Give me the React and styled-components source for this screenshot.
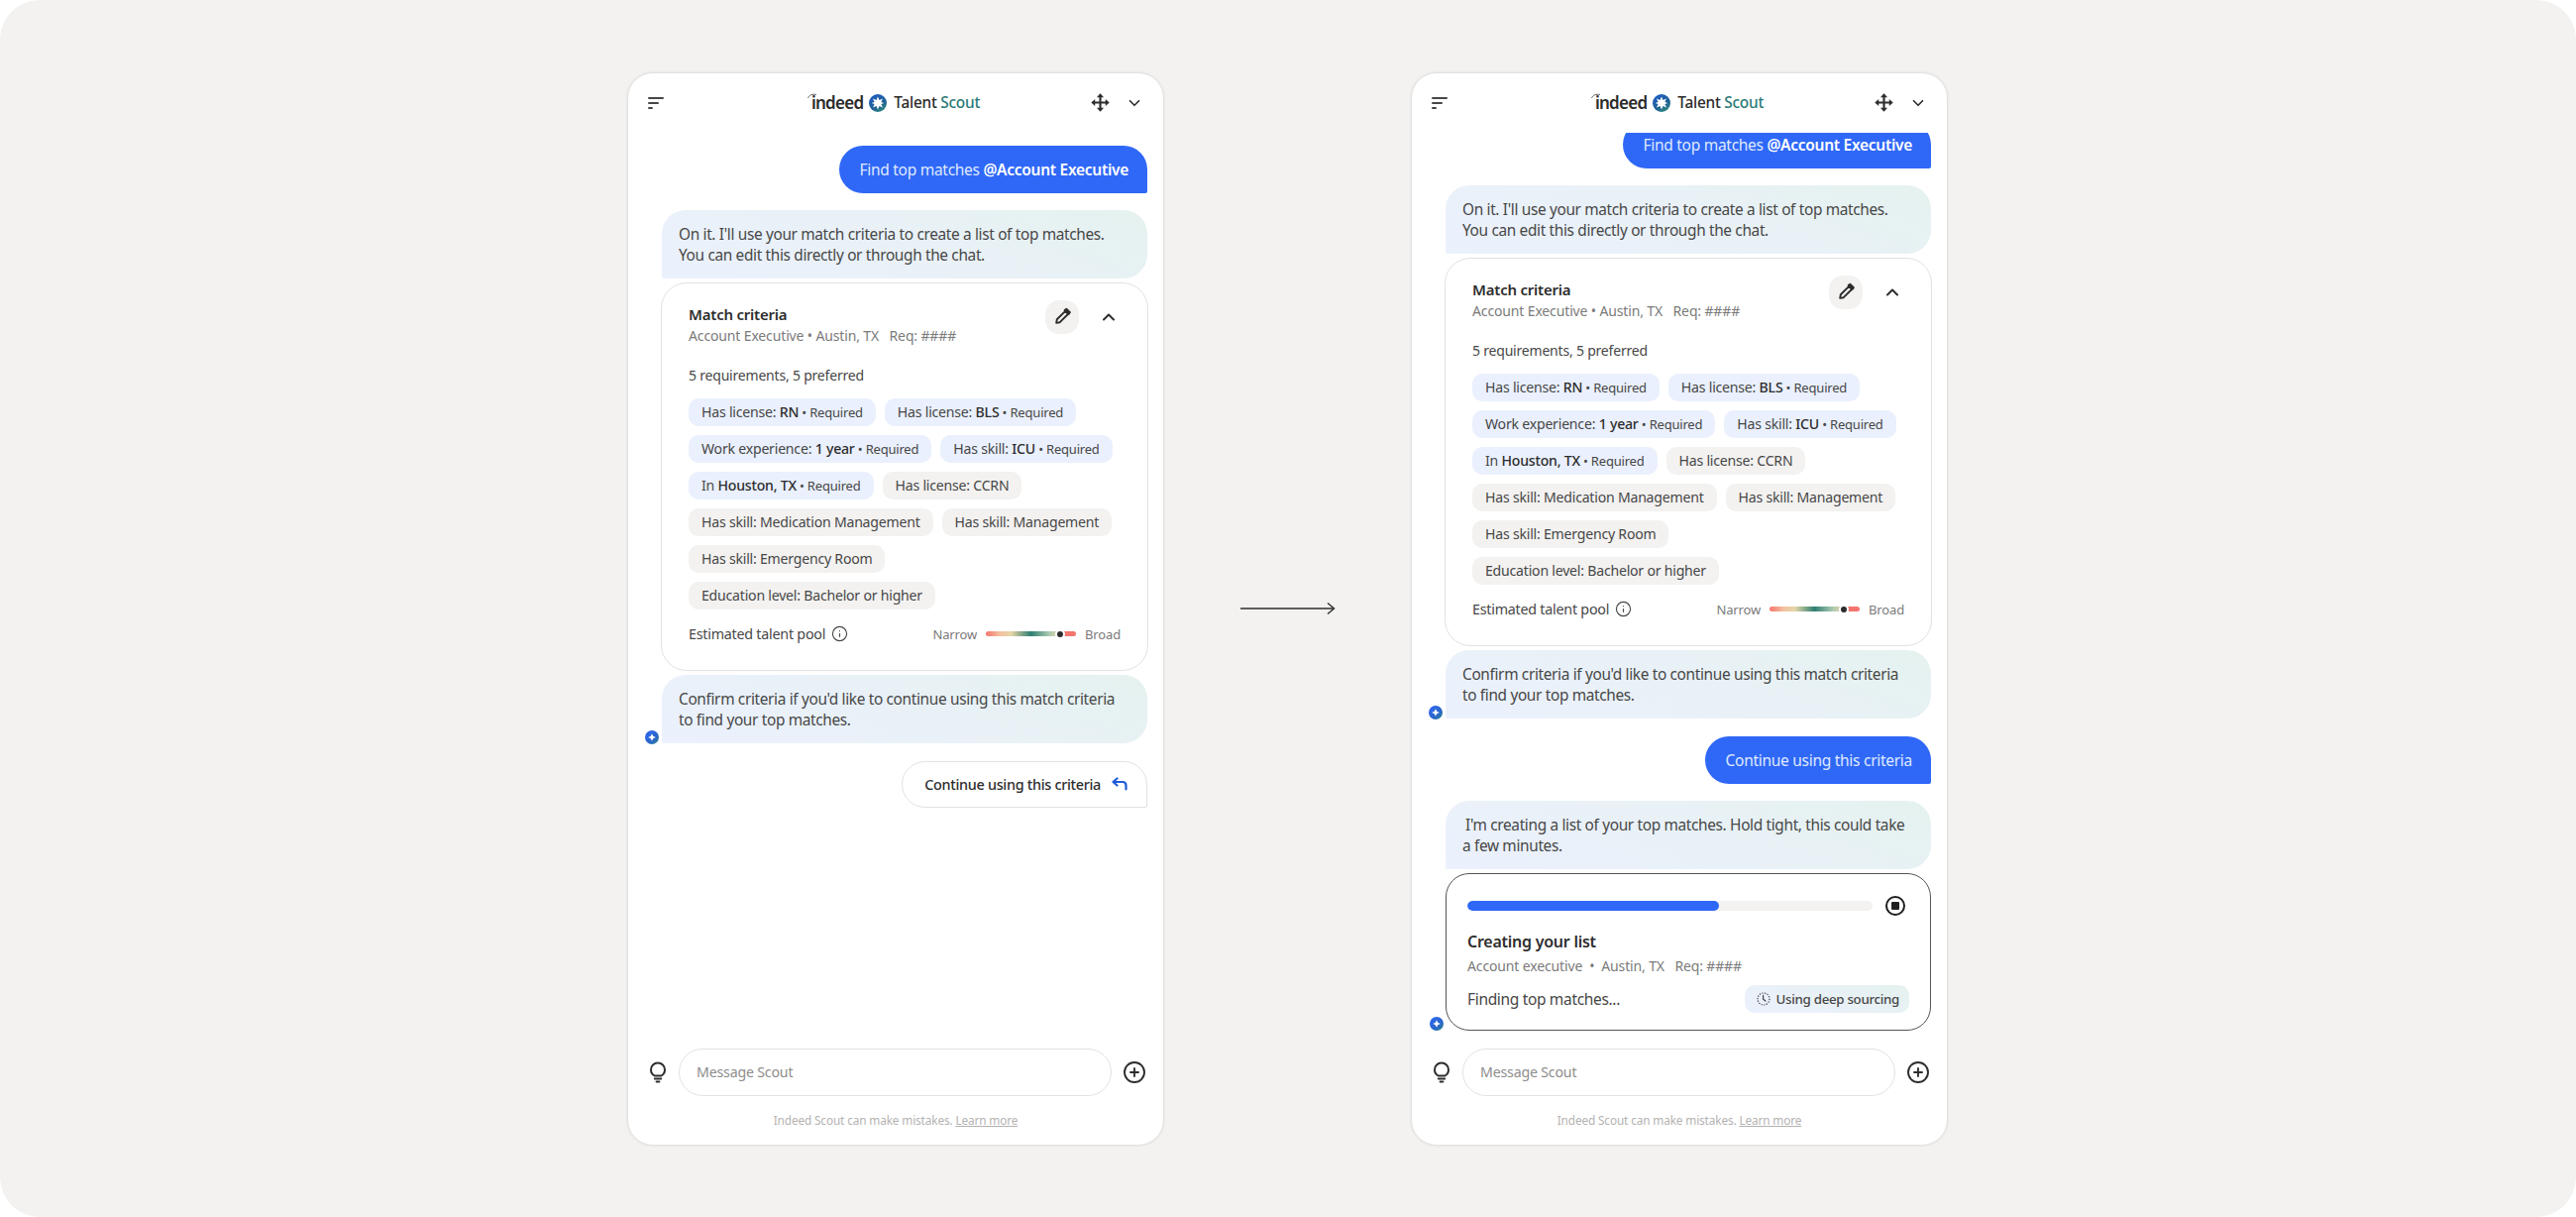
import React from 'react';
import styled, { createGlobalStyle } from 'styled-components';
import { ChevronDown, ChevronUp, CirclePlus, Info } from 'lucide-react';

const FONT = `"Noto Sans", "Open Sans", sans-serif`;
const BLUE = '#2f68f7';
const INK = '#2d2d2d';
const BODY = '#474747';
const MUTED = '#7b7b7b';
const LINE = '#e4e2e0';
const BUBBLE = 'linear-gradient(20deg, #ebf1fd 0%, #e9f1f7 50%, #e5f2ef 100%)';

const GlobalStyle = createGlobalStyle`
    html, body {
        margin: 0;
        padding: 0;
        background: #ffffff;
    }
    * {
        box-sizing: border-box;
    }
`

const Page = styled.div`
    width: 2600px;
    height: 1228px;
    display: flex;
    align-items: center;
    padding-left: 633px;
    overflow: hidden;
    border-radius: 40px;
    background: #f3f2f1;
    font-family: ${FONT};
    color: ${BODY};
`

const ArrowSlot = styled.div`
    width: 249px;
    flex: none;
    display: flex;
    justify-content: center;
`

const Panel = styled.section`
    width: 542px;
    height: 1083px;
    flex: none;
    display: flex;
    flex-direction: column;
    border: 1px solid ${LINE};
    border-radius: 26px;
    background: #ffffff;
    box-shadow: 0 0 3px rgba(0, 0, 0, 0.08);
    overflow: hidden;
`

const Header = styled.header`
    height: 60px;
    flex: none;
    display: grid;
    grid-template-columns: 1fr auto 1fr;
    align-items: center;
    padding: 0 20px;
`

const IconRow = styled.div`
    justify-self: end;
    display: flex;
    align-items: center;
    gap: 16px;
    color: ${INK};
`

const Logo = styled.div`
    display: flex;
    align-items: center;
    gap: 6px;
`

const Wordmark = styled.span`
    position: relative;
    font-size: 17px;
    line-height: 20px;
    font-weight: 600;
    letter-spacing: -0.75px;
    color: #2b2b2b;
`

const WordmarkArc = styled.svg`
    position: absolute;
    left: -4px;
    top: 0;
`

const Product = styled.span`
    margin-left: 1px;
    font-size: 15.4px;
    line-height: 20px;
    font-weight: 500;
    letter-spacing: -0.25px;
    color: #2b2b2b;
`

const ProductAccent = styled.span`
    color: #2a7a78;
`

const Messages = styled.div`
    flex: 1;
    min-height: 0;
    display: flex;
    flex-direction: column;
    justify-content: ${props => (props.$pinned ? 'flex-end' : 'flex-start')};
    padding: ${props => (props.$pinned ? '0 16px 18px 34px' : '13px 16px 0 34px')};
    overflow: hidden;
`

const UserBubble = styled.div`
    align-self: flex-end;
    flex: none;
    height: 48px;
    display: flex;
    align-items: center;
    padding: 0 19px 0 21px;
    margin-bottom: 17px;
    border-radius: 24px 24px 2px 24px;
    background: ${BLUE};
    color: #dfe8ff;
    font-size: 15.5px;
    letter-spacing: -0.28px;
    white-space: pre;
`

const Strong = styled.strong`
    font-weight: ${props => props.$light ? 600 : 500};
    color: ${props => props.$light ? '#ffffff' : INK};
`

const BotBubble = styled.div`
    position: relative;
    flex: none;
    height: 69px;
    padding: 14px 10px 0 17px;
    margin-bottom: ${props => props.$gap || 4}px;
    border-radius: 24px 24px 24px 2px;
    background: ${BUBBLE};
    font-size: 15.4px;
    line-height: 21.5px;
    letter-spacing: -0.34px;
    white-space: nowrap;
`

const Lead = styled.span`
    margin-left: 3px;
`

const Badge = styled.svg`
    position: absolute;
    left: -17px;
    bottom: -1px;
`

const CriteriaCard = styled.div`
    flex: none;
    height: 392px;
    margin: 0 -1px 4px;
    padding: 21px 27px 0;
    border: 1px solid ${LINE};
    border-radius: 26px;
`

const CardTop = styled.div`
    display: flex;
    justify-content: space-between;
    align-items: flex-start;
`

const CardTitle = styled.div`
    font-size: 15px;
    line-height: 20px;
    font-weight: 600;
    letter-spacing: -0.22px;
    color: ${INK};
`

const CardSub = styled.div`
    margin-top: 3px;
    font-size: 14px;
    line-height: 18px;
    letter-spacing: -0.14px;
    color: ${MUTED};
    white-space: pre;
`

const CardActions = styled.div`
    display: flex;
    align-items: center;
    gap: 20px;
    margin: -4px 2px 0 0;
    color: ${INK};
`

const EditButton = styled.div`
    width: 34px;
    height: 34px;
    display: flex;
    align-items: center;
    justify-content: center;
    border-radius: 14px;
    background: #f3f2f1;
`

const Count = styled.div`
    margin-top: 21px;
    font-size: 14px;
    line-height: 20px;
    letter-spacing: -0.2px;
`

const Chips = styled.div`
    display: flex;
    flex-wrap: wrap;
    gap: 9px;
    margin-top: 13px;
`

const Chip = styled.div`
    height: 28px;
    display: flex;
    align-items: center;
    padding: 0 13px;
    border-radius: 10px;
    background: ${props => (props.$required ? '#eaf0fd' : '#f3f2f1')};
    font-size: 14.1px;
    letter-spacing: -0.22px;
    white-space: pre;
`

const ChipNote = styled.span`
    font-size: 13px;
    letter-spacing: -0.2px;
`

const PoolRow = styled.div`
    display: flex;
    align-items: center;
    justify-content: space-between;
    margin-top: 15px;
    height: 20px;
`

const PoolLabel = styled.div`
    display: flex;
    align-items: center;
    gap: 6px;
    font-size: 14.3px;
    letter-spacing: -0.24px;
`

const Gauge = styled.div`
    display: flex;
    align-items: center;
    gap: 9px;
    font-size: 13px;
    letter-spacing: -0.15px;
    color: ${MUTED};
`

const GaugeBar = styled.div`
    position: relative;
    width: 91px;
    height: 5px;
    border-radius: 3px;
    background: linear-gradient(90deg, #f4756e 0%, #f3c2a0 16%, #e6d6a6 28%, #2f7f72 50%, #a9c9b0 70%, #eed9a8 83%, #f4756e 88%, #f4756e 100%);
`

const GaugeDot = styled.span`
    position: absolute;
    left: 70px;
    top: -2.5px;
    width: 10px;
    height: 10px;
    border: 2px solid #ffffff;
    border-radius: 50%;
    background: #2d2d2d;
`

const ReplyButton = styled.div`
    align-self: flex-end;
    flex: none;
    height: 47px;
    display: flex;
    align-items: center;
    gap: 11px;
    padding: 0 19px 0 22px;
    border: 1px solid ${LINE};
    border-radius: 24px 24px 2px 24px;
    font-size: 14.4px;
    font-weight: 500;
    letter-spacing: -0.3px;
    color: ${INK};
`

const ProgressCard = styled.div`
    position: relative;
    flex: none;
    height: 159px;
    padding: 22px 21px 0;
    border: 1.5px solid #555555;
    border-radius: 24px;
`

const ProgressRow = styled.div`
    display: flex;
    align-items: center;
    gap: 13px;
    margin-right: 4px;
`

const Track = styled.div`
    flex: 1;
    height: 10px;
    border-radius: 5px;
    background: #f3f2f1;
    overflow: hidden;
`

const Fill = styled.div`
    height: 100%;
    border-radius: 5px;
    background: ${BLUE};
`

const ProgressTitle = styled.div`
    margin-top: 15px;
    font-size: 16px;
    line-height: 22px;
    font-weight: 600;
    letter-spacing: -0.25px;
    color: ${INK};
`

const ProgressSub = styled(CardSub)`
    margin-top: 5px;
`

const ProgressFoot = styled.div`
    display: flex;
    align-items: center;
    justify-content: space-between;
    margin-top: 10px;
    font-size: 15.5px;
    letter-spacing: -0.33px;
`

const SourcingTag = styled.div`
    height: 28px;
    display: flex;
    align-items: center;
    gap: 6px;
    padding: 0 10px 0 12px;
    border-radius: 10px;
    background: ${BUBBLE};
    font-size: 13.3px;
    font-weight: 500;
    letter-spacing: -0.3px;
`

const Composer = styled.div`
    flex: none;
    display: flex;
    align-items: center;
    gap: 11px;
    padding: 0 17px 0 20px;
    color: ${INK};
`

const Input = styled.div`
    flex: 1;
    height: 48px;
    display: flex;
    align-items: center;
    padding: 0 17px;
    border: 1px solid ${LINE};
    border-radius: 24px;
    font-size: 14.2px;
    letter-spacing: -0.2px;
    color: #8d8d8d;
`

const Disclaimer = styled.div`
    flex: none;
    height: 49px;
    padding-top: 15px;
    text-align: center;
    font-size: 11.8px;
    line-height: 18px;
    letter-spacing: -0.13px;
    color: #b4b2b1;
`

const LearnMore = styled.span`
    text-decoration: underline;
`

const MoveIcon = () => (
    <svg width="19" height="19" viewBox="0 0 18 18" fill="currentColor">
        <path d="M9 0.3 L12.4 4 H5.6 Z M9 17.7 L5.6 14 H12.4 Z M0.3 9 L4 5.6 V12.4 Z M17.7 9 L14 12.4 V5.6 Z" />
        <path d="M9 3 V15 M3 9 H15" stroke="currentColor" strokeWidth="2" fill="none" />
    </svg>
);

const MenuIcon = () => (
    <svg width="16" height="14" viewBox="0 0 16 14" fill="currentColor">
        <rect x="0" y="1" width="16" height="2" rx="1" />
        <rect x="0" y="6" width="11" height="2" rx="1" />
        <rect x="0" y="11" width="5" height="2" rx="1" />
    </svg>
);

const StarBadge = ({ size }) => (
    <svg width={size} height={size} viewBox="0 0 18 18">
        <defs>
            <linearGradient id={`star-${size}`} x1="0.2" y1="0" x2="0.8" y2="1">
                <stop offset="0" stopColor="#1f5fc4" />
                <stop offset="0.6" stopColor="#1f5f95" />
                <stop offset="1" stopColor="#2f8f7c" />
            </linearGradient>
        </defs>
        <circle cx="9" cy="9" r="9" fill={`url(#star-${size})`} />
        <path d="M9 2.6 L10.5 6 L14 4.6 L12.4 8 L15.4 9 L12.4 10 L14 13.4 L10.5 12 L9 15.4 L7.5 12 L4 13.4 L5.6 10 L2.6 9 L5.6 8 L4 4.6 L7.5 6 Z" fill="#ffffff" />
    </svg>
);

const BubbleBadge = () => (
    <Badge width="14" height="14" viewBox="0 0 14 14">
        <defs>
            <linearGradient id="bubble-badge" x1="0" y1="0" x2="1" y2="1">
                <stop offset="0" stopColor="#2f68f7" />
                <stop offset="0.65" stopColor="#2a66c8" />
                <stop offset="1" stopColor="#2f8f7c" />
            </linearGradient>
        </defs>
        <circle cx="7" cy="7" r="7" fill="url(#bubble-badge)" />
        <path d="M7 3.2 L8.2 5.8 L10.8 7 L8.2 8.2 L7 10.8 L5.8 8.2 L3.2 7 L5.8 5.8 Z" fill="#ffffff" />
    </Badge>
);

const PencilIcon = () => (
    <svg width="19" height="19" viewBox="0 0 18 18" fill="none" stroke="currentColor" strokeWidth="1.8" strokeLinejoin="round">
        <path d="M3 15 L3.6 11.6 L11.6 3.6 L14.4 6.4 L6.4 14.4 Z" />
        <path d="M11 2.8 L12.6 1.6 L16 5 L14.8 6.6 Z" fill="currentColor" />
    </svg>
);

const ReplyIcon = () => (
    <svg width="16" height="14" viewBox="0 0 16 14" fill="none" stroke="#1f5bd8" strokeWidth="2.2" strokeLinecap="round" strokeLinejoin="round">
        <path d="M5.5 1.5 L1.5 5 L5.5 8.5" />
        <path d="M2 5 H11 Q14.5 5 14.5 8.5 V12.5" />
    </svg>
);

const BulbIcon = () => (
    <svg width="20" height="24" viewBox="0 0 20 24" fill="none" stroke="currentColor" strokeWidth="2" strokeLinecap="round">
        <path d="M6.6 15.5 C4.4 14.2 3 12 3 9.4 C3 5.6 6.1 2.6 10 2.6 C13.9 2.6 17 5.6 17 9.4 C17 12 15.6 14.2 13.4 15.5 Z" />
        <path d="M6.8 18.6 H13.2" />
        <path d="M8.6 21.4 H11.4" />
    </svg>
);

const StopIcon = () => (
    <svg width="20" height="20" viewBox="0 0 20 20">
        <circle cx="10" cy="10" r="9" fill="none" stroke="#1f1f1f" strokeWidth="2" />
        <rect x="6" y="6" width="8" height="8" rx="1" fill="#1f1f1f" />
    </svg>
);

const DottedClock = () => (
    <svg width="14" height="14" viewBox="0 0 14 14" fill="none" stroke="#424242">
        <circle cx="7" cy="7" r="6" strokeWidth="1.2" strokeDasharray="1.2 1.4" />
        <path d="M6.6 3.4 V7.2 L9 9" strokeWidth="1.2" strokeLinecap="round" strokeLinejoin="round" />
    </svg>
);

const chips = [
    { label: 'Has license: ', value: 'RN', required: true },
    { label: 'Has license: ', value: 'BLS', required: true },
    { label: 'Work experience: ', value: '1 year', required: true },
    { label: 'Has skill: ', value: 'ICU', required: true },
    { label: 'In ', value: 'Houston, TX', required: true },
    { label: 'Has license: CCRN' },
    { label: 'Has skill: Medication Management' },
    { label: 'Has skill: Management' },
    { label: 'Has skill: Emergency Room' },
    { label: 'Education level: Bachelor or higher' },
];

function Criteria() {
    return (
        <CriteriaCard>
            <CardTop>
                <div>
                    <CardTitle>Match criteria</CardTitle>
                    <CardSub>Account Executive • Austin, TX   Req: ####</CardSub>
                </div>
                <CardActions>
                    <EditButton><PencilIcon /></EditButton>
                    <ChevronUp size={20} strokeWidth={2.4} />
                </CardActions>
            </CardTop>
            <Count>5 requirements, 5 preferred</Count>
            <Chips>
                {chips.map(chip => (
                    <Chip key={chip.label + (chip.value || '')} $required={chip.required}>
                        {chip.label}
                        {chip.value && <Strong>{chip.value}</Strong>}
                        {chip.required && <ChipNote> • Required</ChipNote>}
                    </Chip>
                ))}
            </Chips>
            <PoolRow>
                <PoolLabel>Estimated talent pool <Info size={17} strokeWidth={1.6} /></PoolLabel>
                <Gauge>
                    Narrow
                    <GaugeBar><GaugeDot /></GaugeBar>
                    Broad
                </Gauge>
            </PoolRow>
        </CriteriaCard>
    );
}

function Conversation() {
    return (
        <>
            <UserBubble>Find top matches <Strong $light>@Account Executive</Strong></UserBubble>
            <BotBubble>
                On it. I'll use your match criteria to create a list of top matches.<br />
                You can edit this directly or through the chat.
            </BotBubble>
            <Criteria />
            <BotBubble $gap={18}>
                Confirm criteria if you'd like to continue using this match criteria<br />
                to find your top matches.
                <BubbleBadge />
            </BotBubble>
        </>
    );
}

function Chat({ pinned, children }) {
    return (
        <Panel>
            <Header>
                <MenuIcon />
                <Logo>
                    <Wordmark>
                        <WordmarkArc width="11" height="6" viewBox="0 0 11 6" fill="none" stroke="#555" strokeWidth="0.9">
                            <path d="M0.5 5 C2 1.5 5 0.8 9 1.4" />
                        </WordmarkArc>
                        indeed
                    </Wordmark>
                    <StarBadge size={18} />
                    <Product>Talent <ProductAccent>Scout</ProductAccent></Product>
                </Logo>
                <IconRow>
                    <MoveIcon />
                    <ChevronDown size={18} strokeWidth={2.2} />
                </IconRow>
            </Header>
            <Messages $pinned={pinned}>
                <Conversation />
                {children}
            </Messages>
            <Composer>
                <BulbIcon />
                <Input>Message Scout</Input>
                <CirclePlus size={24} strokeWidth={1.9} />
            </Composer>
            <Disclaimer>Indeed Scout can make mistakes. <LearnMore>Learn more</LearnMore></Disclaimer>
        </Panel>
    );
}

export default function App() {
    return (
        <Page>
            <GlobalStyle />
            <Chat>
                <ReplyButton>Continue using this criteria <ReplyIcon /></ReplyButton>
            </Chat>
            <ArrowSlot>
                <svg width="96" height="14" viewBox="0 0 96 14" fill="none" stroke="#2d2d2d" strokeWidth="1.4">
                    <path d="M0 7 H94" />
                    <path d="M88 1.5 L94.5 7 L88 12.5" />
                </svg>
            </ArrowSlot>
            <Chat pinned>
                <UserBubble>Continue using this criteria</UserBubble>
                <BotBubble>
                    <Lead>I'm creating a list of your top matches. Hold tight, this could take</Lead><br />
                    a few minutes.
                </BotBubble>
                <ProgressCard>
                    <ProgressRow>
                        <Track><Fill style={{ width: '62%' }} /></Track>
                        <StopIcon />
                    </ProgressRow>
                    <ProgressTitle>Creating your list</ProgressTitle>
                    <ProgressSub>Account executive  •  Austin, TX   Req: ####</ProgressSub>
                    <ProgressFoot>
                        Finding top matches...
                        <SourcingTag><DottedClock /> Using deep sourcing</SourcingTag>
                    </ProgressFoot>
                    <BubbleBadge />
                </ProgressCard>
            </Chat>
        </Page>
    );
}
